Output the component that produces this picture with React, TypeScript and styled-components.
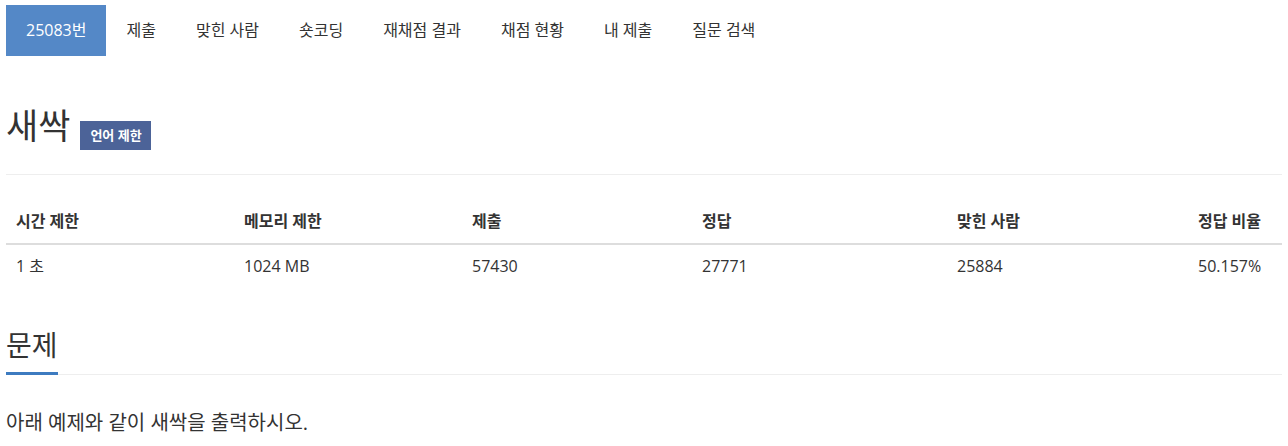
import React from "react";
import styled, {createGlobalStyle} from "styled-components";

const GlobalStyle = createGlobalStyle`
  html, body {
    margin: 0;
    padding: 0;
    background: #fff;
  }
  body {
    font-family: "Open Sans", "Noto Sans CJK KR", sans-serif;
    color: #333;
  }
  * {
    box-sizing: border-box;
  }
`;

const Page = styled.div`
  padding: 5px 6px 0 6px;
`;

const Tabs = styled.ul`
  display: flex;
  list-style: none;
  margin: 0;
  padding: 0;
`;

const Tab = styled.li<{ $active?: boolean }>`
  padding: 15px 20px;
  font-size: 16px;
  line-height: 21px;
  color: ${(p) => (p.$active ? "#fff" : "#333")};
  background: ${(p) => (p.$active ? "#5488c7" : "transparent")};
`;

const TitleRow = styled.div`
  display: flex;
  align-items: flex-end;
  gap: 10px;
  margin-top: 50px;
  padding-bottom: 28px;
  border-bottom: 1px solid #eee;
`;

const Title = styled.h1`
  margin: 0;
  font-size: 35px;
  font-weight: 400;
  line-height: 40px;
  color: #333;
`;

const Label = styled.span`
  display: inline-block;
  background: #4c6398;
  color: #fff;
  font-size: 13px;
  font-weight: 700;
  line-height: 17px;
  padding: 6px 9px 6px 10px;
  margin-bottom: -4px;
`;

const InfoTable = styled.table`
  width: 100%;
  table-layout: fixed;
  border-collapse: collapse;
  margin-top: 24px;
  font-size: 16px;

  th, td {
    text-align: left;
    line-height: 22px;
  }

  th {
    padding: 11px 10px;
    font-weight: 700;
    border-bottom: 2px solid #ddd;
  }

  td {
    padding: 10px 10px;
  }
`;

const SectionHead = styled.div`
  margin-top: 40px;
  border-bottom: 1px solid #eee;
`;

const SectionTitle = styled.h2`
  display: inline-block;
  margin: 0 0 -1px 0;
  font-size: 28px;
  font-weight: 400;
  line-height: 36px;
  color: #333;
  padding-bottom: 9px;
  border-bottom: 3px solid #3d7bc0;
`;

const ProblemText = styled.p`
  margin: 33px 0 0 0;
  font-size: 20px;
  line-height: 30px;
  color: #333;
`;

const tabs = ["25083번", "제출", "맞힌 사람", "숏코딩", "재채점 결과", "채점 현황", "내 제출", "질문 검색"];
const widths = [228, 228, 230, 255, 241, 94];
const heads = ["시간 제한", "메모리 제한", "제출", "정답", "맞힌 사람", "정답 비율"];
const values = ["1 초", "1024 MB", "57430", "27771", "25884", "50.157%"];

const App: React.FC = () => {
  return (
    <>
      <GlobalStyle />
      <Page>
        <Tabs>
          {tabs.map((t, i) => (
            <Tab key={t} $active={i === 0}>{t}</Tab>
          ))}
        </Tabs>

        <TitleRow>
          <Title>새싹</Title>
          <Label>언어 제한</Label>
        </TitleRow>

        <InfoTable>
          <colgroup>
            {widths.map((w, i) => (
              <col key={i} style={{width: w}} />
            ))}
          </colgroup>
          <thead>
            <tr>
              {heads.map((h) => (
                <th key={h}>{h}</th>
              ))}
            </tr>
          </thead>
          <tbody>
            <tr>
              {values.map((v) => (
                <td key={v}>{v}</td>
              ))}
            </tr>
          </tbody>
        </InfoTable>

        <SectionHead>
          <SectionTitle>문제</SectionTitle>
        </SectionHead>
        <ProblemText>아래 예제와 같이 새싹을 출력하시오.</ProblemText>
      </Page>
    </>
  );
};

export default App;
